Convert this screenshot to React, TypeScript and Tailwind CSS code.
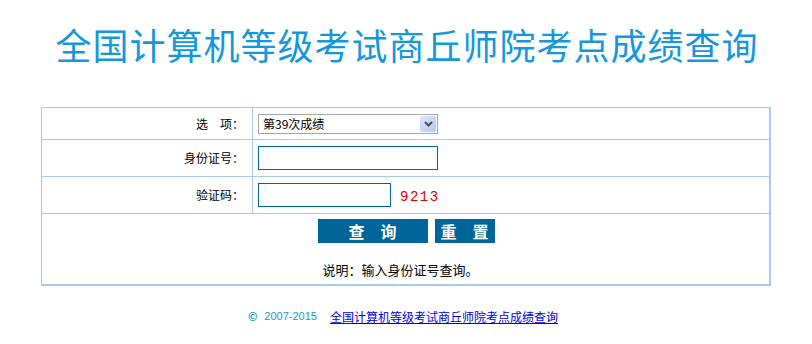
import React from 'react';

const cjk = '"Noto Sans CJK SC", "Noto Sans", sans-serif';

function FakeSelect() {
  return (
    <div className="flex h-[20px] w-[180px] items-center justify-between border border-[#a5a5a5] bg-white pl-[4px] pr-px">
      <span className="text-[12px] leading-none text-black">第39次成绩</span>
      <span className="flex h-[16px] w-[16px] items-center justify-center rounded-[2px] bg-gradient-to-br from-[#dbe4ff] to-[#b4c8fb]">
        <svg width="9" height="6" viewBox="0 0 9 6">
          <path d="M1 1 L4.5 4.5 L8 1" stroke="#4d4d4d" strokeWidth="2" fill="none" />
        </svg>
      </span>
    </div>
  );
}

export default function App() {
  return (
    <div className="w-[812px] h-[344px] bg-white" style={{ fontFamily: cjk }}>
      <h1 className="pt-[24px] pl-[2px] text-center text-[36px] leading-[40px] tracking-[1px] text-[#1597dc] font-normal">
        全国计算机等级考试商丘师院考点成绩查询
      </h1>

      <div className="mt-[43px] flex justify-center">
        <table className="w-[730px] border-collapse border-l border-t border-r-2 border-b-2 border-[#a9c9ef] text-[12px] text-black">
          <tbody>
            <tr className="h-[32px]">
              <td className="w-[211px] border border-[#a9c9ef] pr-[8px] text-right">选&emsp;项：</td>
              <td className="border border-[#a9c9ef] pl-[5px]">
                <FakeSelect />
              </td>
            </tr>
            <tr className="h-[37px]">
              <td className="border border-[#a9c9ef] pr-[8px] text-right">身份证号：</td>
              <td className="border border-[#a9c9ef] pl-[5px]">
                <input type="text" className="block h-[24px] w-[180px] border border-[#006699] bg-white outline-none" />
              </td>
            </tr>
            <tr className="h-[37px]">
              <td className="border border-[#a9c9ef] pr-[8px] text-right">验证码：</td>
              <td className="border border-[#a9c9ef] pl-[5px]">
                <div className="flex items-center">
                  <input type="text" className="block h-[24px] w-[133px] border border-[#006699] bg-white outline-none" />
                  <span
                    className="ml-[9px] mt-[4px] text-[14px] leading-none tracking-[1.5px] text-[#e00000]"
                    style={{ fontFamily: '"Liberation Mono", monospace' }}
                  >
                    9213
                  </span>
                </div>
              </td>
            </tr>
            <tr className="h-[71px]">
              <td colSpan={2} className="border border-[#a9c9ef] align-top">
                <div className="mt-[5px] flex justify-center gap-[7px] pl-[1px]">
                  <button className="h-[24px] w-[110px] bg-[#006699] text-[16px] font-bold leading-none text-white">
                    查&emsp;询
                  </button>
                  <button className="h-[24px] w-[60px] bg-[#006699] text-[16px] font-bold leading-none text-white">
                    重&emsp;置
                  </button>
                </div>
                <p className="mt-[20px] pr-[10px] text-center text-[13px] leading-none">
                  说明：输入身份证号查询。
                </p>
              </td>
            </tr>
          </tbody>
        </table>
      </div>

      <div className="mt-[25px] flex items-center justify-center text-[12px] leading-none pr-[6px]">
        <span className="text-[11px] font-bold text-[#1597dc]">©</span>
        <span
          className="ml-[7px] text-[11px] text-[#1597dc]"
          style={{ fontFamily: '"Liberation Sans", Arial, sans-serif' }}
        >
          2007-2015
        </span>
        <a href="#" className="ml-[13px] text-[#0000ee] underline">
          全国计算机等级考试商丘师院考点成绩查询
        </a>
      </div>
    </div>
  );
}
